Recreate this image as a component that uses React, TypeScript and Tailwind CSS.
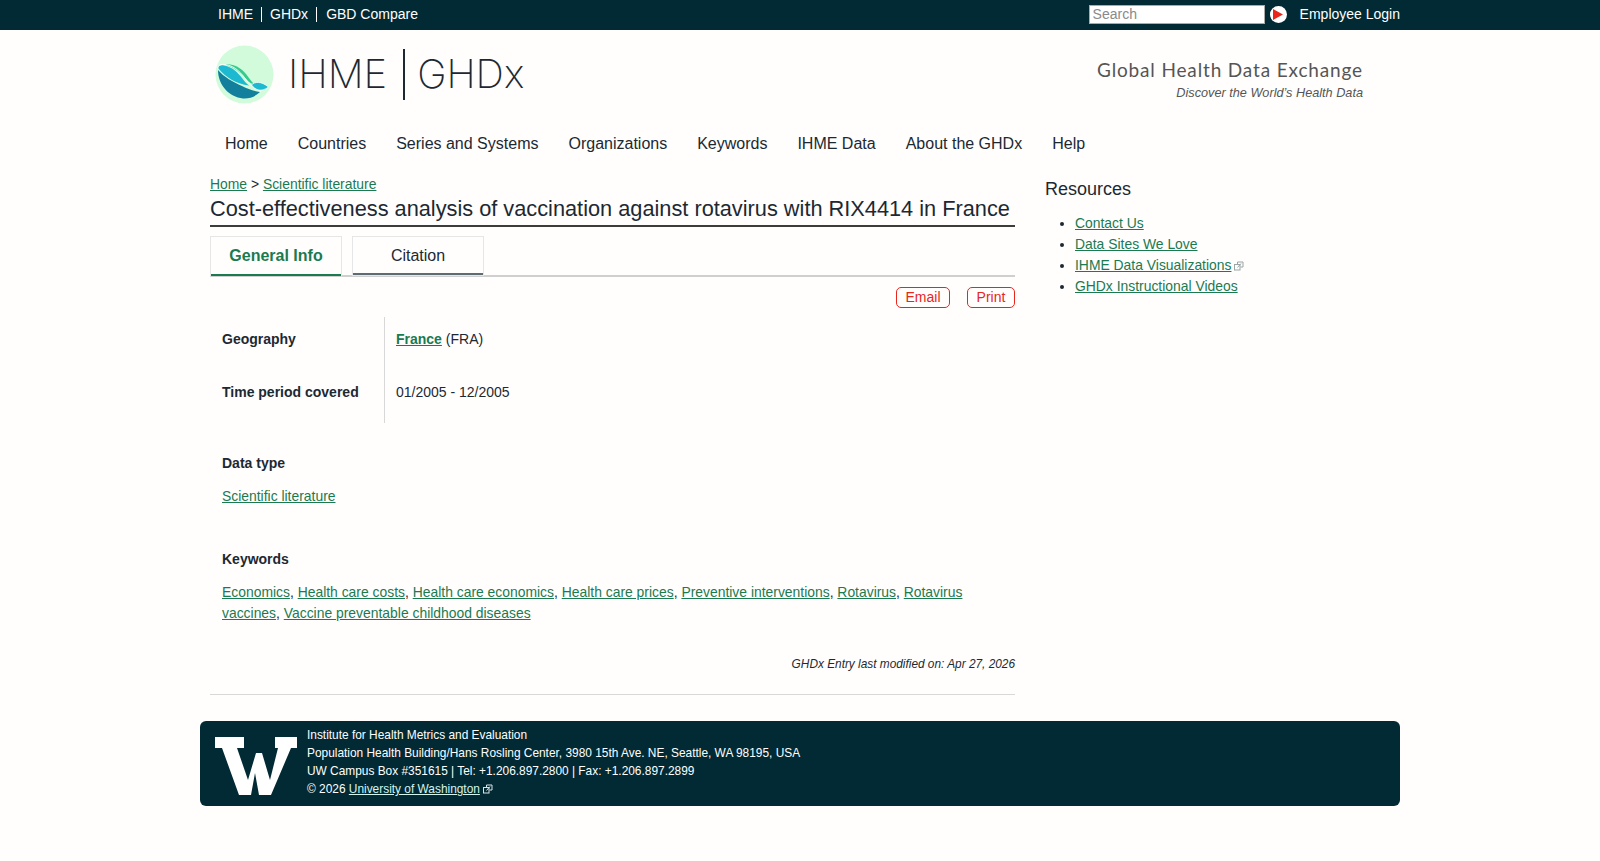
import React from "react";

const Ext = ({ c = "#9aa5a5" }: { c?: string }) => (
  <svg width="10" height="10" viewBox="0 0 10 10" className="inline-block ml-[3px] align-[-1px]" fill="none" stroke={c} strokeWidth="1">
    <rect x="0.5" y="3.5" width="5.5" height="5.5" />
    <path d="M3.5 3V1H9V6H6.5M3.5 6.5L7 2.5" />
  </svg>
);

const A = ({ children, className = "" }: { children: React.ReactNode; className?: string }) => (
  <a href="#" className={"text-[#1b7a50] underline " + className}>{children}</a>
);

const Logo = () => (
  <svg width="59" height="59" viewBox="0 0 59 59" className="shrink-0">
    <circle cx="29.5" cy="29.5" r="29" fill="#d2fbdc" />
    <path d="M3 25C3 40 14 52 28 53.5C35 54 41 51 45 47C38 46 33 44 27 41C18 37 9 32 3 25Z" fill="#12809c" />
    <path d="M3 23C3 20.5 6 20 9 20.5C18 22 23 28 27 33C29 36 31 38 34 40.5C22 39 11 33 3 23Z" fill="#1cb9d0" />
    <path d="M10 19.5C18 18.5 25 22 31 29C34 33 36 36 38.5 38.5C37 39 35 38 33 36C27 29 21 23 10 19.5Z" fill="#32cc8c" />
    <path d="M3 23.5C3 20 6 19 10 19.5C21 21 27 29 32 36C34 39 39 43 46 46.5" fill="none" stroke="#fff" strokeWidth="0.9" />
    <path d="M36.5 40C40 36.5 46 36 53.5 42C49 45.5 45 45.5 42 44.5C40 43.5 38 42 36.5 40Z" fill="#1cb9d0" stroke="#fff" strokeWidth="0.7" />
  </svg>
);

const nav = ["Home", "Countries", "Series and Systems", "Organizations", "Keywords", "IHME Data", "About the GHDx", "Help"];

export default function App() {
  return (
    <div className="min-h-[861px] bg-[#fffefd] text-[#1c2933] text-[14px] leading-[21px] font-['Liberation_Sans',Arial,sans-serif]">
      <div className="h-[30px] bg-[#022a34] text-white">
        <div className="w-[1200px] mx-auto flex items-center h-full pl-[18px] pb-[1px]">
          <a className="pr-[8px] border-r border-white leading-[15px]">IHME</a>
          <a className="px-[8px] border-r border-white leading-[15px]">GHDx</a>
          <a className="pl-[9px] leading-[15px]">GBD Compare</a>
          <div className="ml-auto flex items-center">
            <input placeholder="Search" className="w-[176px] h-[19px] bg-white border border-[#aaa] px-[3px] text-[14px] text-black placeholder:text-[#8a8a8a] outline-none" />
            <span className="w-[17px] h-[17px] ml-[5px] rounded-full bg-white flex items-center justify-center">
              <svg width="10" height="11" viewBox="0 0 10 11"><path d="M0 0L10 5.5L0 11Z" fill="#e8261c" /></svg>
            </span>
            <a className="ml-[13px]">Employee Login</a>
          </div>
        </div>
      </div>

      <div className="w-[1200px] mx-auto">
        <div className="flex items-start h-[100px] pl-[15px] pt-[15px]">
          <Logo />
          <span className="ml-[14px] mt-[9px] text-[40px] leading-[40px] font-['Inter',sans-serif] font-extralight text-[#1c2933]">IHME</span>
          <span className="ml-[16px] mt-[4px] w-[2px] h-[51px] bg-[#1c2933]" />
          <span className="ml-[12px] mt-[9px] text-[39.5px] leading-[40px] font-['Inter',sans-serif] font-extralight text-[#1c2933]">GHDx</span>
          <div className="ml-auto mr-[37px] mt-[13px] text-right text-[#555]">
            <div className="text-[19px] leading-[24px] font-['Lato',sans-serif] tracking-[0.85px]">Global Health Data Exchange</div>
            <div className="text-[12.7px] leading-[22px] italic">Discover the World’s Health Data</div>
          </div>
        </div>

        <nav className="flex h-[44px] items-center pl-[25px] gap-[30px] text-[16px] mt-[-9px] mb-[8px]">
          {nav.map((n) => <a key={n}>{n}</a>)}
        </nav>

        <div className="flex pt-[1px]">
          <main className="w-[805px] ml-[10px]">
            <div className="h-[21px] text-[13.9px]"><A>Home</A> &gt; <A>Scientific literature</A></div>
            <h1 className="text-[21.75px] leading-[28px] h-[28px] pb-[2px] border-b-[2px] border-[#3c3c3c] box-content whitespace-nowrap">Cost-effectiveness analysis of vaccination against rotavirus with RIX4414 in France</h1>

            <div className="mt-[9px] flex gap-[10px] border-b-[2px] border-[#cfcfcf] h-[41px]">
              <div className="w-[132px] h-[41px] pb-[2px] border border-[#e6e6e6] border-b-transparent flex items-center justify-center text-[16px] font-bold text-[#1b7a50] shadow-[inset_0_-2px_0_#1b7a50]">General Info</div>
              <div className="w-[132px] h-[40px] pb-[2px] border border-[#e6e6e6] flex items-center justify-center text-[16px] shadow-[inset_0_-2px_0_#5d6b73]">Citation</div>
            </div>

            <div className="flex justify-end gap-[17px] mt-[10px]">
              <a className="h-[21px] w-[54px] flex items-center justify-center rounded-[5px] border border-[#e8261c] text-[#e8261c]">Email</a>
              <a className="h-[21px] w-[48px] flex items-center justify-center rounded-[5px] border border-[#e8261c] text-[#e8261c]">Print</a>
            </div>

            <div className="mt-[9px] grid grid-cols-[175px_1fr]">
              <div className="h-[53px] pl-[12px] pt-[12px] font-bold border-r border-[#d8d8d8]">Geography</div>
              <div className="pl-[11px] pt-[12px]"><A className="font-bold">France</A> (FRA)</div>
              <div className="h-[53px] pl-[12px] pt-[12px] font-bold border-r border-[#d8d8d8]">Time period covered</div>
              <div className="pl-[11px] pt-[12px]">01/2005 - 12/2005</div>
            </div>

            <div className="pl-[12px]">
              <div className="mt-[30px] font-bold">Data type</div>
              <div className="mt-[12px] text-[13.9px]"><A>Scientific literature</A></div>
              <div className="mt-[42px] font-bold">Keywords</div>
              <div className="mt-[12px] pr-[30px] text-[13.9px]">
                <A>Economics</A>, <A>Health care costs</A>, <A>Health care economics</A>, <A>Health care prices</A>, <A>Preventive interventions</A>, <A>Rotavirus</A>, <A>Rotavirus vaccines</A>, <A>Vaccine preventable childhood diseases</A>
              </div>
            </div>

            <div className="mt-[30px] text-right text-[11.85px] italic leading-[21px]">GHDx Entry last modified on: Apr 27, 2026</div>
            <div className="mt-[19px] border-t border-[#d8d8d8]" />
          </main>

          <aside className="ml-[30px] flex-1">
            <h2 className="mt-[3px] text-[18px] leading-[25px]">Resources</h2>
            <ul className="mt-[11px] pl-[30px] list-disc text-[13.9px]">
              <li><A>Contact Us</A></li>
              <li><A>Data Sites We Love</A></li>
              <li><A>IHME Data Visualizations</A><Ext /></li>
              <li><A>GHDx Instructional Videos</A></li>
            </ul>
          </aside>
        </div>

        <footer className="mt-[26px] h-[85px] rounded-[6px] bg-[#022a34] text-white flex text-[11.9px] leading-[18px]">
          <svg width="82" height="58" viewBox="0 0 82 58" className="ml-[15px] mt-[16px] shrink-0">
            <path d="M0 0H29V11H22L33 43L41 16H47L55 43L63 11H60V0H82V11H76L56 58H44L40 36L36 58H24L7 11H0Z" fill="#fff" />
          </svg>
          <div className="ml-[10px] pt-[5px]">
            <div>Institute for Health Metrics and Evaluation</div>
            <div>Population Health Building/Hans Rosling Center, 3980 15th Ave. NE, Seattle, WA 98195, USA</div>
            <div>UW Campus Box #351615 | Tel: +1.206.897.2800 | Fax: +1.206.897.2899</div>
            <div>© 2026 <a className="underline text-[#d4f5ee]">University of Washington</a><Ext c="#d8e4e4" /></div>
          </div>
        </footer>
      </div>
    </div>
  );
}
